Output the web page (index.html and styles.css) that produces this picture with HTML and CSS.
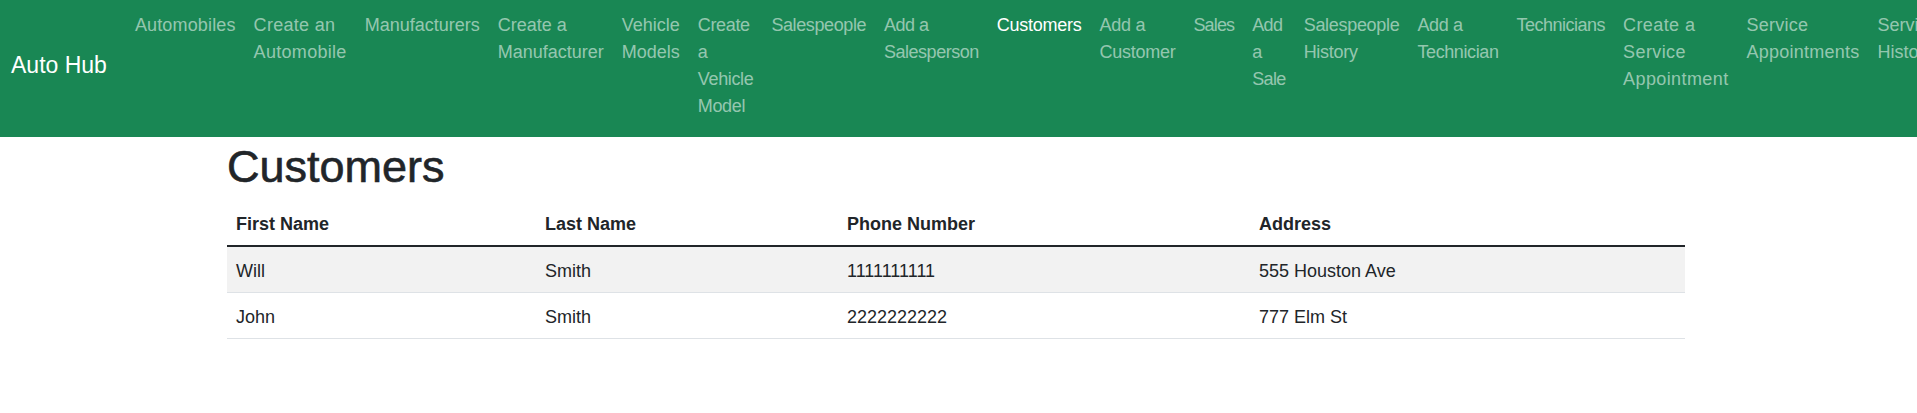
FILE: index.html
```html
<!DOCTYPE html>
<html lang="en">
<head>
<meta charset="utf-8">
<title>Auto Hub</title>
<link rel="stylesheet" href="styles.css">
</head>
<body>
<nav class="navbar">
  <div class="nav-inner">
    <a class="brand" href="#">Auto Hub</a>
    <ul class="nav-list">
      <li><a class="nav-link ls-p15" href="#">Automobiles</a></li>
      <li><a class="nav-link ls-p30" href="#">Create an Automobile</a></li>
      <li><a class="nav-link" href="#">Manufacturers</a></li>
      <li><a class="nav-link" href="#">Create a Manufacturer</a></li>
      <li><a class="nav-link" href="#">Vehicle Models</a></li>
      <li><a class="nav-link ls-m35" href="#">Create a Vehicle Model</a></li>
      <li><a class="nav-link ls-m40" href="#">Salespeople</a></li>
      <li><a class="nav-link ls-m50" href="#">Add a Salesperson</a></li>
      <li><a class="nav-link active ls-m25" href="#">Customers</a></li>
      <li><a class="nav-link ls-m25" href="#">Add a Customer</a></li>
      <li><a class="nav-link ls-m85" href="#">Sales</a></li>
      <li><a class="nav-link ls-m65" href="#">Add a Sale</a></li>
      <li><a class="nav-link ls-m30" href="#">Salespeople History</a></li>
      <li><a class="nav-link ls-m40" href="#">Add a Technician</a></li>
      <li><a class="nav-link ls-m50" href="#">Technicians</a></li>
      <li><a class="nav-link ls-p40" href="#">Create a Service Appointment</a></li>
      <li><a class="nav-link ls-p25" href="#">Service Appointments</a></li>
      <li><a class="nav-link" href="#">Service History</a></li>
    </ul>
  </div>
</nav>
<main class="container">
  <h1 class="title">Customers</h1>
  <table class="table">
    <thead>
      <tr>
        <th class="col-first">First Name</th>
        <th class="col-last">Last Name</th>
        <th class="col-phone">Phone Number</th>
        <th class="col-address">Address</th>
      </tr>
    </thead>
    <tbody>
      <tr class="striped">
        <td>Will</td>
        <td>Smith</td>
        <td>1111111111</td>
        <td>555 Houston Ave</td>
      </tr>
      <tr>
        <td>John</td>
        <td>Smith</td>
        <td>2222222222</td>
        <td>777 Elm St</td>
      </tr>
    </tbody>
  </table>
</main>
</body>
</html>
```

FILE: styles.css
```css
* {
  box-sizing: border-box;
}

html, body {
  margin: 0;
  padding: 0;
}

body {
  font-family: "Liberation Sans", Arial, sans-serif;
  font-size: 18px;
  line-height: 27px;
  color: #212529;
  background: #ffffff;
  overflow-x: hidden;
}

.navbar {
  background: #198754;
  padding: 9px 0 8px;
  overflow: hidden;
}

.nav-inner {
  display: flex;
  align-items: center;
  padding: 0 11px;
}

.brand {
  flex-shrink: 0;
  color: #ffffff;
  text-decoration: none;
  font-size: 23px;
  line-height: 33.75px;
  padding: 5.6px 0;
  margin-right: 19px;
  margin-bottom: 7px;
  white-space: nowrap;
}

.nav-list {
  display: flex;
  flex-wrap: nowrap;
  list-style: none;
  margin: 0;
  padding: 0;
  align-self: flex-start;
}

.nav-list li {
  flex: 0 1 auto;
}

.nav-link {
  display: block;
  padding: 3px 9px 9px;
  color: rgba(255, 255, 255, 0.55);
  text-decoration: none;
}

.nav-link.active {
  color: #ffffff;
}

/* per-link tracking to follow the original UI font's word widths */
.ls-p15 { letter-spacing: 0.15px; }
.ls-p25 { letter-spacing: 0.25px; }
.ls-p30 { letter-spacing: 0.3px; }
.ls-p40 { letter-spacing: 0.4px; }
.ls-m25 { letter-spacing: -0.25px; }
.ls-m30 { letter-spacing: -0.3px; }
.ls-m35 { letter-spacing: -0.35px; }
.ls-m40 { letter-spacing: -0.4px; }
.ls-m50 { letter-spacing: -0.5px; }
.ls-m65 { letter-spacing: -0.65px; }
.ls-m85 { letter-spacing: -0.85px; }

.container {
  width: 1458px;
  margin: 0 0 0 227px;
}

.title {
  margin: 0 0 6px;
  padding-top: 3px;
  font-size: 45px;
  line-height: 54px;
  font-weight: 400;
  -webkit-text-stroke: 0.6px #212529;
}

.table {
  width: 100%;
  border-collapse: collapse;
  table-layout: fixed;
}

.table th,
.table td {
  text-align: left;
  padding: 11px 9px 7px;
  line-height: 27px;
  vertical-align: top;
}

.table th {
  font-weight: 700;
  border-bottom: 2px solid #212529;
}

.table td {
  border-bottom: 1px solid #dee2e6;
}

.col-first { width: 309px; }
.col-last { width: 302px; }
.col-phone { width: 412px; }

.striped td {
  background: #f2f2f2;
}
```
